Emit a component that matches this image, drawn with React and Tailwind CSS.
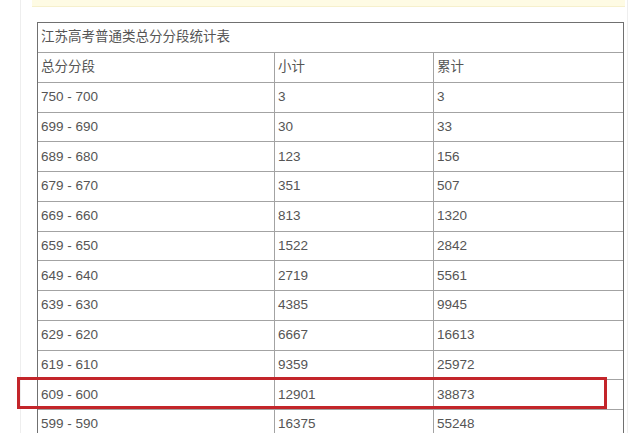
import React from 'react'

// 江苏高考普通类总分分段统计表
const ROWS = [
  ['750 - 700', '3', '3'],
  ['699 - 690', '30', '33'],
  ['689 - 680', '123', '156'],
  ['679 - 670', '351', '507'],
  ['669 - 660', '813', '1320'],
  ['659 - 650', '1522', '2842'],
  ['649 - 640', '2719', '5561'],
  ['639 - 630', '4385', '9945'],
  ['629 - 620', '6667', '16613'],
  ['619 - 610', '9359', '25972'],
  ['609 - 600', '12901', '38873'],
  ['599 - 590', '16375', '55248'],
]

function Row({ cells }) {
  return (
    <div className="flex h-[29.75px] border-b border-[#a3a3a3]">
      <div className="w-[236px] shrink-0 flex items-center pl-[3px]">{cells[0]}</div>
      <div className="w-[159px] shrink-0 flex items-center pl-[3px] border-l border-[#a3a3a3]">{cells[1]}</div>
      <div className="flex-1 flex items-center pl-[3px] border-l border-[#a3a3a3]">{cells[2]}</div>
    </div>
  )
}

export default function App() {
  return (
    <div className="relative w-[640px] h-[433px] overflow-hidden bg-white text-[13.5px] text-[#555] font-['Liberation_Sans','Noto_Sans_CJK_SC',sans-serif]">
      <div className="ml-[20px] w-[608px] h-full border-l border-r border-[#eeeeee]">
        {/* aviso amarillo (cortado arriba) */}
        <div className="ml-[11px] w-[593px] h-[7px] bg-[#fefbe4] border-b border-[#f6f0cc]" />

        {/* tabla */}
        <div className="mt-[15px] ml-[16px] w-[587px] border-l border-t border-r border-[#707070]">
          <div className="h-[30px] flex items-center pl-[3px] border-b border-[#a3a3a3]">
            江苏高考普通类总分分段统计表
          </div>
          <Row cells={['总分分段', '小计', '累计']} />
          {ROWS.map(r => <Row key={r[0]} cells={r} />)}
        </div>
      </div>

      {/* marco rojo de resaltado */}
      <div className="absolute left-[17px] top-[377px] w-[590px] h-[32px] border-[3px] border-[#c3252a]" />
    </div>
  )
}
